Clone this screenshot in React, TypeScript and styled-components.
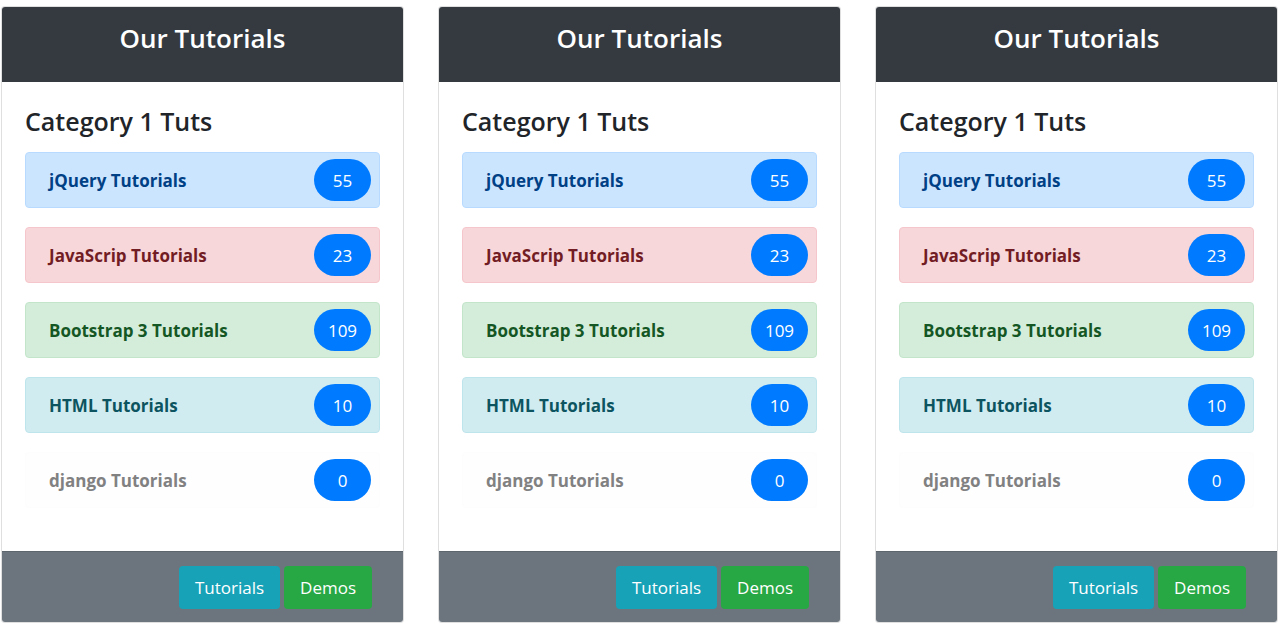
import styled, { createGlobalStyle } from 'styled-components';

const FONT = `"Open Sans", "Liberation Sans", Arial, sans-serif`;

const GlobalStyle = createGlobalStyle`
    * { box-sizing: border-box; }
    body {
        margin: 0;
        background: #fff;
        font-family: ${FONT};
        color: #212529;
    }
`;

const Page = styled.div`
    display: grid;
    grid-template-columns: repeat(3, 403px);
    column-gap: 34px;
    padding: 6px 0 0 1px;
`;

const Card = styled.section`
    display: flex;
    flex-direction: column;
    height: 617px;
    border: 1px solid rgba(0, 0, 0, 0.125);
    border-radius: 4px;
    overflow: hidden;
    background: #fff;
`;

const Header = styled.header`
    height: 75px;
    display: flex;
    align-items: center;
    justify-content: center;
    padding-bottom: 13px;
    background: #343a40;
    color: #fff;
`;

const Title = styled.h2`
    margin: 0;
    font-size: 26px;
    font-weight: 600;
`;

const Body = styled.div`
    flex: 1;
    padding: 24px 23px 0 23px;
`;

const SubTitle = styled.h3`
    margin: 0 0 16px;
    font-size: 25px;
    font-weight: 600;
    line-height: 1.2;
    color: #212529;
`;

const List = styled.ul`
    list-style: none;
    margin: 0;
    padding: 0;
    display: flex;
    flex-direction: column;
    gap: 19px;
`;

const variants = {
    primary: { bg: '#cce5ff', fg: '#004085', border: '#b8daff' },
    danger: { bg: '#f8d7da', fg: '#721c24', border: '#f5c6cb' },
    success: { bg: '#d4edda', fg: '#155724', border: '#c3e6cb' },
    info: { bg: '#d1ecf1', fg: '#0c5460', border: '#bee5eb' },
    light: { bg: '#fefefe', fg: '#818182', border: '#fdfdfe' },
};

type Variant = keyof typeof variants;

const Item = styled.li<{ $variant: Variant }>`
    display: flex;
    align-items: center;
    justify-content: space-between;
    height: 56px;
    padding: 0 8px 0 23px;
    border: 1px solid ${p => variants[p.$variant].border};
    border-radius: 4px;
    background: ${p => variants[p.$variant].bg};
    color: ${p => variants[p.$variant].fg};
    font-size: 17px;
    font-weight: 700;
`;

const Badge = styled.span`
    display: inline-flex;
    align-items: center;
    justify-content: center;
    width: 57px;
    height: 42px;
    border-radius: 21px;
    background: #007bff;
    color: #fff;
    font-size: 17px;
    font-weight: 400;
`;

const Footer = styled.footer`
    height: 71px;
    display: flex;
    align-items: center;
    justify-content: flex-end;
    gap: 4px;
    padding: 1px 31px 0 0;
    background: #6c757d;
    border-top: 1px solid rgba(0, 0, 0, 0.125);
`;

const Button = styled.button<{ $color: string }>`
    height: 43px;
    padding: 0 16px;
    border: none;
    border-radius: 4px;
    background: ${p => p.$color};
    color: #fff;
    font-family: ${FONT};
    font-size: 17px;
    cursor: pointer;
`;

interface ITut {
    name: string;
    count: number;
    variant: Variant;
}

const tuts: ITut[] = [
    { name: 'jQuery Tutorials', count: 55, variant: 'primary' },
    { name: 'JavaScrip Tutorials', count: 23, variant: 'danger' },
    { name: 'Bootstrap 3 Tutorials', count: 109, variant: 'success' },
    { name: 'HTML Tutorials', count: 10, variant: 'info' },
    { name: 'django Tutorials', count: 0, variant: 'light' },
];

function TutorialCard() {
    return (
        <Card>
            <Header>
                <Title>Our Tutorials</Title>
            </Header>
            <Body>
                <SubTitle>Category 1 Tuts</SubTitle>
                <List>
                    {tuts.map(t => (
                        <Item key={t.name} $variant={t.variant}>
                            {t.name}
                            <Badge>{t.count}</Badge>
                        </Item>
                    ))}
                </List>
            </Body>
            <Footer>
                <Button $color="#17a2b8">Tutorials</Button>
                <Button $color="#28a745">Demos</Button>
            </Footer>
        </Card>
    );
}

export default function App() {
    return (
        <>
            <GlobalStyle />
            <Page>
                <TutorialCard />
                <TutorialCard />
                <TutorialCard />
            </Page>
        </>
    );
}
